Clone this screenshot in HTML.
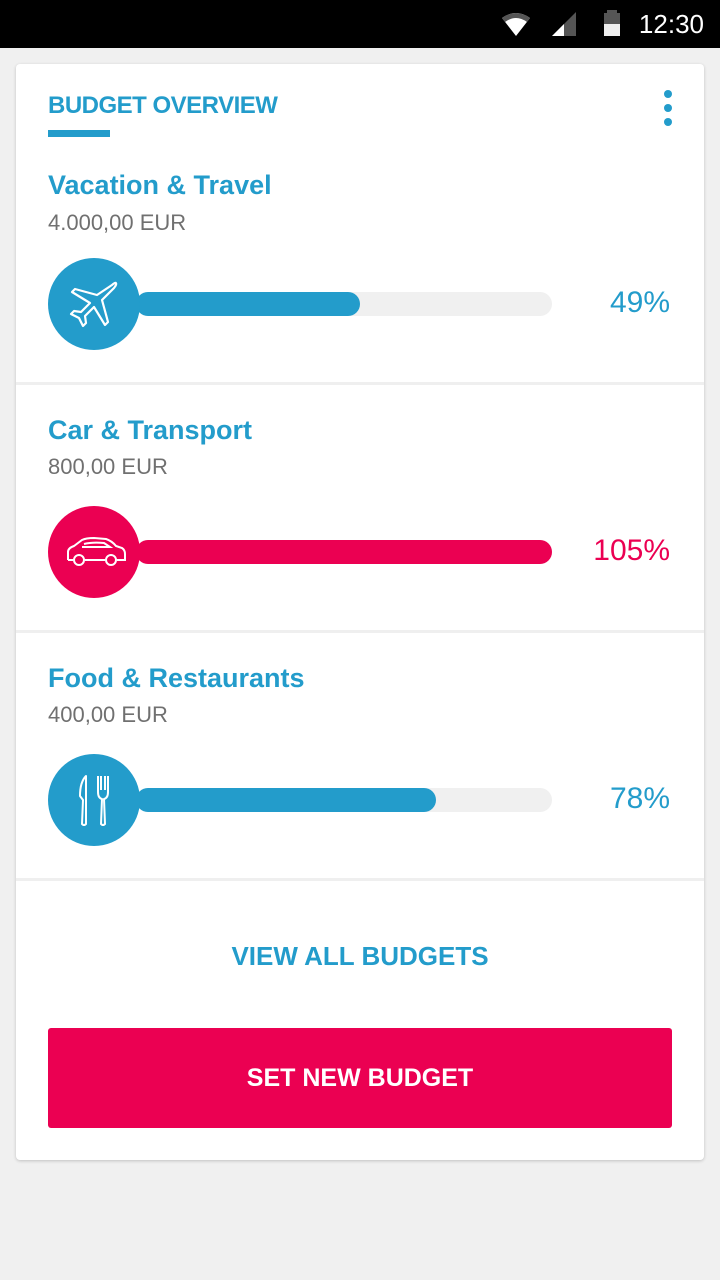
<!DOCTYPE html>
<html><head><meta charset="utf-8"><style>
*{margin:0;padding:0;box-sizing:border-box}
body{width:720px;height:1280px;background:#f0f0f0;font-family:"Liberation Sans",sans-serif;position:relative;overflow:hidden}
.sb{position:absolute;left:0;top:0;width:720px;height:48px;background:#000}
.time{position:absolute;right:16px;top:9px;color:#fff;font-size:26px}
.card{position:absolute;left:16px;top:64px;width:688px;height:1096px;background:#fff;border-radius:4px;box-shadow:0 1px 3px rgba(0,0,0,.2)}
.abs{position:absolute}
.h{left:32px;top:28px;color:#239ccb;font-weight:bold;font-size:24px;letter-spacing:-0.5px}
.ul{left:32px;top:66px;width:62px;height:7px;background:#239ccb}
.dot{left:648px;width:8px;height:8px;border-radius:50%;background:#239ccb}
.div{left:0;width:688px;height:3px;background:#efefef}
.t{left:32px;color:#239ccb;font-weight:bold;font-size:27px;letter-spacing:0}
.a{left:32px;color:#707070;font-size:22px}
.track{left:120px;width:416px;height:24px;border-radius:12px;background:#f0f0f0}
.fill{position:absolute;left:0;top:0;height:24px;border-radius:12px}
.circ{left:32px;width:92px;height:92px;border-radius:50%}
.p{right:34px;font-size:30px;font-weight:300}
.va{left:0;width:688px;text-align:center;top:877px;color:#239ccb;font-weight:bold;font-size:26px}
.btn{left:32px;top:964px;width:624px;height:100px;background:#eb0052;border-radius:3px;color:#fff;font-weight:bold;font-size:25px;text-align:center;line-height:100px}
</style></head><body>
<div class="sb">
<svg class="abs" style="left:500px;top:12px" width="32" height="26" viewBox="0 0 32 26"><path d="M2 6 Q16 -4 30 6 L16 24Z" fill="#fff"/><path d="M2 6 Q16 -4 30 6 L27 10 Q16 2 5 10Z" fill="#555"/></svg>
<svg class="abs" style="left:552px;top:12px" width="24" height="24"><path d="M0 24 L24 0 V24Z" fill="#555"/><path d="M0 24 L12 12 V24Z" fill="#fff"/></svg>
<svg class="abs" style="left:604px;top:10px" width="16" height="26"><rect x="3" y="0" width="10" height="4" fill="#555"/><rect x="0" y="3" width="16" height="23" fill="#555"/><rect x="0" y="14" width="16" height="12" fill="#eee"/></svg>
<div class="time">12:30</div>
</div>
<div class="card">
<div class="abs h">BUDGET OVERVIEW</div>
<div class="abs ul"></div>
<div class="abs dot" style="top:26px"></div><div class="abs dot" style="top:40px"></div><div class="abs dot" style="top:54px"></div>

<div class="abs t" style="top:106px">Vacation &amp; Travel</div>
<div class="abs a" style="top:146px">4.000,00 EUR</div>
<div class="abs track" style="top:228px"><div class="fill" style="width:224px;background:#239ccb"></div></div>
<div class="abs circ" style="top:194px;background:#239ccb"><svg width="92" height="92" viewBox="0 0 92 92"><g fill="none" stroke="#fff" stroke-width="2.2" stroke-linejoin="round"><path d="M64 27 C68 23 70 25 66 30 L54 42 L60 64 L57 67 L46 49 L37 58 L38 65 L35 68 L31 60 L23 56 L26 53 L33 54 L42 45 L24 34 L27 31 L49 37Z"/></g></svg></div>
<div class="abs p" style="top:222px;color:#239ccb">49%</div>
<div class="abs div" style="top:318px"></div>

<div class="abs t" style="top:351px">Car &amp; Transport</div>
<div class="abs a" style="top:390px">800,00 EUR</div>
<div class="abs track" style="top:476px"><div class="fill" style="width:416px;background:#eb0052"></div></div>
<div class="abs circ" style="top:442px;background:#eb0052"><svg width="92" height="92" viewBox="0 0 92 92"><g fill="none" stroke="#fff" stroke-width="2"><path d="M20 54 V46 Q20 42 26 40 L34 34 Q38 32 46 32 L58 33 Q64 35 68 40 L74 42 Q77 44 77 48 V54 H69 M57 54 H37 M25 54 H20"/><path d="M36 38 Q44 36 56 37 L62 41 H34"/><circle cx="31" cy="54" r="5"/><circle cx="63" cy="54" r="5"/></g></svg></div>
<div class="abs p" style="top:470px;color:#eb0052">105%</div>
<div class="abs div" style="top:566px"></div>

<div class="abs t" style="top:599px">Food &amp; Restaurants</div>
<div class="abs a" style="top:638px">400,00 EUR</div>
<div class="abs track" style="top:724px"><div class="fill" style="width:300px;background:#239ccb"></div></div>
<div class="abs circ" style="top:690px;background:#239ccb"><svg width="92" height="92" viewBox="0 0 92 92"><g fill="none" stroke="#fff" stroke-width="2" stroke-linejoin="round"><path d="M38 22 Q32 28 32 42 L35 46 L34 70 Q36 72 38 70 L38 22Z"/><path d="M50 22 V38 Q50 44 54 45 L53 70 Q55 72 57 70 L56 45 Q60 44 60 38 V22 M53 22 V36 M57 22 V36"/></g></svg></div>
<div class="abs p" style="top:718px;color:#239ccb">78%</div>
<div class="abs div" style="top:814px"></div>

<div class="abs va">VIEW ALL BUDGETS</div>
<div class="abs btn">SET NEW BUDGET</div>
</div>
</body></html>
